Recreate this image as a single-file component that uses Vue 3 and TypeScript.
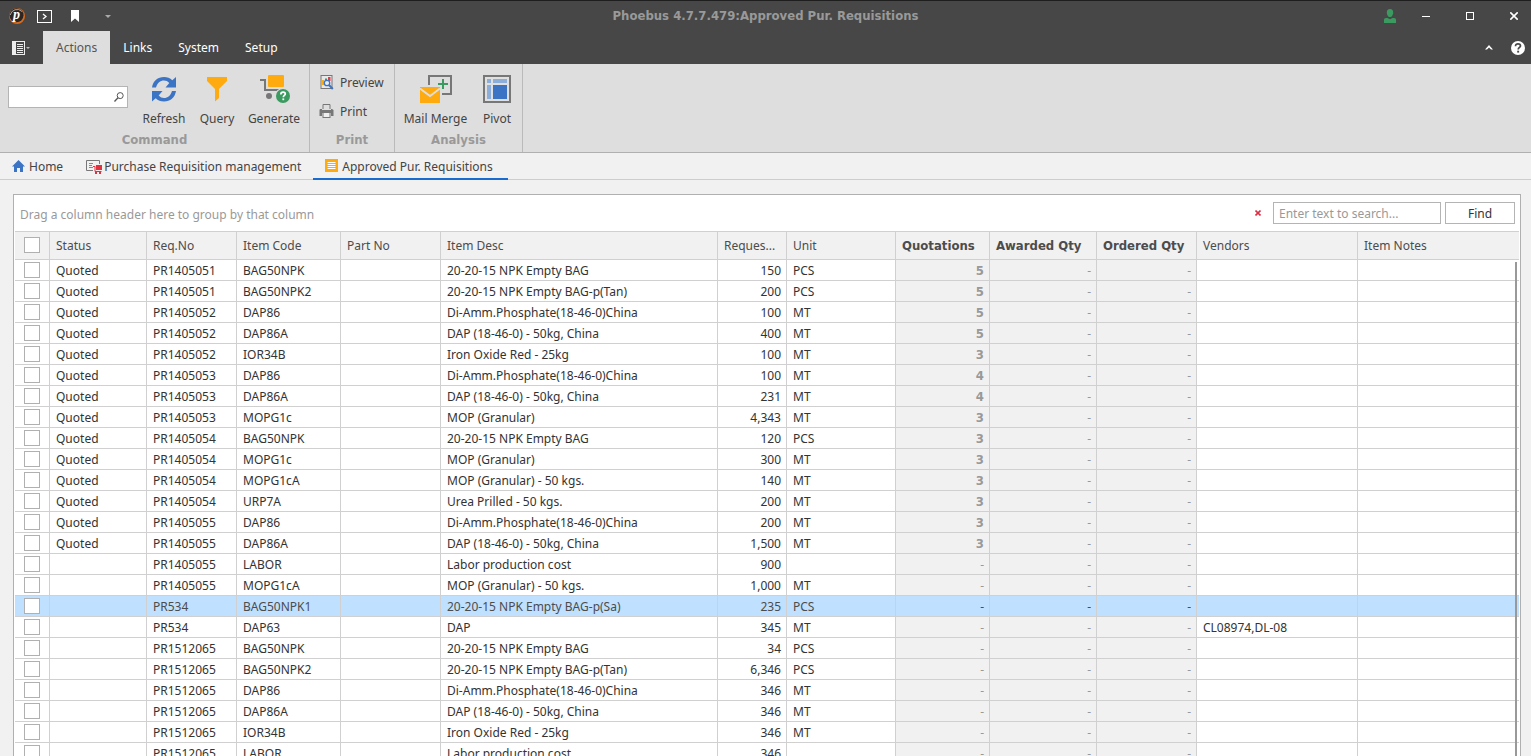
<script setup lang="ts">
import { ref } from 'vue'

interface Column {
  key: string
  title: string
  width: number | null
  summary?: boolean
}

interface Requisition {
  status: string
  reqNo: string
  code: string
  desc: string
  qty: string
  unit: string
  quotations: string
  vendors: string
}

const columns: Column[] = [
  { key: 'status', title: 'Status', width: 97 },
  { key: 'reqNo', title: 'Req.No', width: 90 },
  { key: 'code', title: 'Item Code', width: 104 },
  { key: 'partNo', title: 'Part No', width: 100 },
  { key: 'desc', title: 'Item Desc', width: 277 },
  { key: 'qty', title: 'Reques...', width: 69 },
  { key: 'unit', title: 'Unit', width: 109 },
  { key: 'quotations', title: 'Quotations', width: 94, summary: true },
  { key: 'awarded', title: 'Awarded Qty', width: 107, summary: true },
  { key: 'ordered', title: 'Ordered Qty', width: 100, summary: true },
  { key: 'vendors', title: 'Vendors', width: 161 },
  { key: 'notes', title: 'Item Notes', width: null },
]

const row = (
  status: string, reqNo: string, code: string, desc: string,
  qty: string, unit: string, quotations = '-', vendors = '',
): Requisition => ({ status, reqNo, code, desc, qty, unit, quotations, vendors })

const NPK = '20-20-15 NPK Empty BAG'
const PHOSPHATE = 'Di-Amm.Phosphate(18-46-0)China'
const DAP = 'DAP (18-46-0) - 50kg, China'

const rows = ref<Requisition[]>([
  row('Quoted', 'PR1405051', 'BAG50NPK', NPK, '150', 'PCS', '5'),
  row('Quoted', 'PR1405051', 'BAG50NPK2', NPK + '-p(Tan)', '200', 'PCS', '5'),
  row('Quoted', 'PR1405052', 'DAP86', PHOSPHATE, '100', 'MT', '5'),
  row('Quoted', 'PR1405052', 'DAP86A', DAP, '400', 'MT', '5'),
  row('Quoted', 'PR1405052', 'IOR34B', 'Iron Oxide Red - 25kg', '100', 'MT', '3'),
  row('Quoted', 'PR1405053', 'DAP86', PHOSPHATE, '100', 'MT', '4'),
  row('Quoted', 'PR1405053', 'DAP86A', DAP, '231', 'MT', '4'),
  row('Quoted', 'PR1405053', 'MOPG1c', 'MOP (Granular)', '4,343', 'MT', '3'),
  row('Quoted', 'PR1405054', 'BAG50NPK', NPK, '120', 'PCS', '3'),
  row('Quoted', 'PR1405054', 'MOPG1c', 'MOP (Granular)', '300', 'MT', '3'),
  row('Quoted', 'PR1405054', 'MOPG1cA', 'MOP (Granular) - 50 kgs.', '140', 'MT', '3'),
  row('Quoted', 'PR1405054', 'URP7A', 'Urea Prilled - 50 kgs.', '200', 'MT', '3'),
  row('Quoted', 'PR1405055', 'DAP86', PHOSPHATE, '200', 'MT', '3'),
  row('Quoted', 'PR1405055', 'DAP86A', DAP, '1,500', 'MT', '3'),
  row('', 'PR1405055', 'LABOR', 'Labor production cost', '900', ''),
  row('', 'PR1405055', 'MOPG1cA', 'MOP (Granular) - 50 kgs.', '1,000', 'MT'),
  row('', 'PR534', 'BAG50NPK1', NPK + '-p(Sa)', '235', 'PCS'),
  row('', 'PR534', 'DAP63', 'DAP', '345', 'MT', '-', 'CL08974,DL-08'),
  row('', 'PR1512065', 'BAG50NPK', NPK, '34', 'PCS'),
  row('', 'PR1512065', 'BAG50NPK2', NPK + '-p(Tan)', '6,346', 'PCS'),
  row('', 'PR1512065', 'DAP86', PHOSPHATE, '346', 'MT'),
  row('', 'PR1512065', 'DAP86A', DAP, '346', 'MT'),
  row('', 'PR1512065', 'IOR34B', 'Iron Oxide Red - 25kg', '346', 'MT'),
  row('', 'PR1512065', 'LABOR', 'Labor production cost', '346', ''),
])

const selected = ref(16)
const command = ref('')
const search = ref('')
const menus = ['Actions', 'Links', 'System', 'Setup']
const activeMenu = ref('Actions')
</script>

<template>
  <div class="window">
    <header class="chrome">
      <div class="titlebar">
        <div class="quick">
          <svg class="logo" width="16" height="16" viewBox="0 0 16 16" aria-hidden="true">
            <circle cx="8" cy="8" r="8" fill="#d96a1c" />
            <circle cx="7.5" cy="7.3" r="7" fill="#2b2624" />
            <path d="M1.200 7A7 7 0 0 1 13 3.500" stroke="#a9a29c" fill="none" />
            <text x="4" y="11" font-size="14" font-weight="bold" font-style="italic" fill="#fff" font-family="Liberation Serif, serif">p</text>
          </svg>
          <button class="plain" aria-label="Run command">
            <svg width="15" height="13" viewBox="0 0 15 13"><rect x=".5" y=".5" width="14" height="12" fill="none" stroke="#fff" /><path d="M6 4l3 2.500L6 9" fill="none" stroke="#fff" stroke-width="1.300" /></svg>
          </button>
          <button class="plain" aria-label="Bookmark">
            <svg width="8" height="12" viewBox="0 0 8 12"><path d="M0 0h8v12L4 8.500 0 12z" fill="#fff" /></svg>
          </button>
          <button class="plain" aria-label="Customize quick access">
            <svg width="6" height="3" viewBox="0 0 6 3"><path d="M0 0h6L3 3z" fill="#aaa" /></svg>
          </button>
        </div>
        <h1>Phoebus 4.7.7.479:Approved Pur. Requisitions</h1>
        <div class="controls">
          <button class="plain" aria-label="User">
            <svg width="12" height="14" viewBox="0 0 12 14"><path d="M6 0c2.200 0 3.200 1.400 3.200 3.400S8 8 6 8 2.800 5.400 2.800 3.400 3.800 0 6 0zM0 14v-3c0-1.300.7-2 2-2h1.500l2.500 1.300L8.500 9H10c1.300 0 2 .7 2 2v3z" fill="#3a9a60" /></svg>
          </button>
          <button class="plain" aria-label="Minimize">
            <svg width="8" height="8" viewBox="0 0 8 8"><path d="M0 4.500h8" stroke="#fff" /></svg>
          </button>
          <button class="plain" aria-label="Maximize">
            <svg width="8" height="8" viewBox="0 0 8 8"><rect x=".5" y=".5" width="7" height="7" fill="none" stroke="#fff" /></svg>
          </button>
          <button class="plain" aria-label="Close">
            <svg width="8" height="8" viewBox="0 0 8 8"><path d="M.3.3l7.400 7.400M7.700.3L.3 7.700" stroke="#fff" stroke-width="1.600" /></svg>
          </button>
        </div>
      </div>
      <nav class="menubar">
        <button class="file" aria-label="File menu">
          <svg width="18" height="14" viewBox="0 0 18 14"><rect width="3" height="14" fill="#eee" /><rect x="3.500" y=".5" width="9" height="13" fill="none" stroke="#eee" /><path d="M5 3.500h6M5 5.500h6M5 7.500h6M5 9.500h6M5 11.500h6" stroke="#eee" /><path d="M14 6h4l-2 2z" fill="#bbb" /></svg>
        </button>
        <button
          v-for="m in menus" :key="m" class="menu" :class="{ active: m === activeMenu }"
          @click="activeMenu = m"
        >{{ m }}</button>
        <div class="menu-end">
          <button class="plain" aria-label="Collapse ribbon">
            <svg width="8" height="5" viewBox="0 0 8 5"><path d="M4 0l4 4.500H6L4 2.600 2 4.500H0z" fill="#fff" /></svg>
          </button>
          <button class="plain" aria-label="Help">
            <svg width="14" height="14" viewBox="0 0 14 14"><circle cx="7" cy="7" r="7" fill="#fff" /><path d="M4.500 5.200C4.500 3.600 5.500 2.800 7 2.800s2.500.8 2.500 2.100C9.500 6.400 7.200 6.500 7.200 8.600" fill="none" stroke="#474747" stroke-width="1.700" /><rect x="6.200" y="9.700" width="1.900" height="1.900" fill="#474747" /></svg>
          </button>
        </div>
      </nav>
    </header>

    <section class="ribbon">
      <div class="group">
        <div class="tools command">
          <div class="command-box">
            <input v-model="command" type="text" aria-label="Command" />
            <svg width="10" height="10" viewBox="0 0 10 10" aria-hidden="true"><circle cx="6.200" cy="3.600" r="3" fill="none" stroke="#555" /><path d="M4 5.800L.5 9.500" stroke="#555" stroke-width="1.300" /></svg>
          </div>
          <button class="big refresh">
            <svg width="32" height="32" viewBox="0 0 32 32" aria-hidden="true"><g fill="#3b74c5"><path d="M4 14.500C5 8 9.800 4 16 4c3.300 0 6 1 8.300 3.200L28 4v10.500H17.500L21.300 10C19.800 8.300 18 7.500 16 7.500c-3.800 0-6.700 2.500-8 7z" /><path d="M28 18c-1 6.500-5.800 10.500-12 10.500-3.300 0-6-1-8.300-3.200L4 28.500V18h10.500l-3.800 4.500c1.500 1.700 3.300 2.500 5.300 2.500 3.800 0 6.700-2.500 8-7z" /></g></svg>
            <span>Refresh</span>
          </button>
          <button class="big query">
            <svg width="32" height="32" viewBox="0 0 32 32" aria-hidden="true"><path d="M6 4h20v4l-8 8v9l-4 3.500V16L6 8z" fill="#ffab0f" /></svg>
            <span>Query</span>
          </button>
          <button class="big generate">
            <svg width="32" height="32" viewBox="0 0 32 32" aria-hidden="true"><path d="M2 7h5v10h14" fill="none" stroke="#777" stroke-width="2" /><rect x="10" y="2" width="16" height="12" rx="1" fill="#ffab0f" /><circle cx="11" cy="23" r="3" fill="#777" /><circle cx="25" cy="23" r="8" fill="#dedede" /><circle cx="25" cy="23" r="7" fill="#3a9a60" /><path d="M22.800 21.500c0-1.700 1-2.400 2.300-2.400s2.200.7 2.200 1.800c0 1.500-2 1.500-2 3.300" fill="none" stroke="#fff" stroke-width="1.700" /><rect x="24.400" y="25.400" width="1.800" height="1.800" fill="#fff" /></svg>
            <span>Generate</span>
          </button>
        </div>
        <div class="caption">Command</div>
      </div>

      <div class="group">
        <div class="tools stack">
          <button class="small">
            <svg width="16" height="16" viewBox="0 0 16 16" aria-hidden="true"><rect x="2" y="1.500" width="11" height="13" fill="#e8e8e8" stroke="#777" /><path d="M3 6h2v5H3z" fill="#ffab0f" /><path d="M6 4.500h2V7H6z" fill="#3a9a60" /><path d="M9 3h2.500v4H9z" fill="#e23b4a" /><circle cx="8" cy="9" r="2.700" fill="#eee" stroke="#3b74c5" stroke-width="1.300" /><path d="M10 11l3.800 4" stroke="#3b74c5" stroke-width="2" /></svg>
            <span>Preview</span>
          </button>
          <button class="small">
            <svg width="16" height="16" viewBox="0 0 16 16" aria-hidden="true"><path d="M4 6V1.500h7V6" fill="none" stroke="#777" /><path d="M1 6h2v1h9V6h1l1.500 1v6H12v-3H3v3H.5V7z" fill="#777" /><rect x="4" y="9.500" width="7" height="5" fill="#eee" stroke="#777" /></svg>
            <span>Print</span>
          </button>
        </div>
        <div class="caption">Print</div>
      </div>

      <div class="group">
        <div class="tools analysis">
          <button class="big merge">
            <svg width="32" height="32" viewBox="0 0 32 32" aria-hidden="true"><path d="M9 12V3h22v18h-9" fill="none" stroke="#777" stroke-width="2" /><path d="M23 6v10M18 11h10" stroke="#3a9a60" stroke-width="2" /><rect y="14" width="20" height="16" fill="#ffab0f" /><path d="M0 15.500L10 23l10-7.500" fill="none" stroke="#dedede" stroke-width="1.800" /></svg>
            <span>Mail Merge</span>
          </button>
          <button class="big pivot">
            <svg width="32" height="32" viewBox="0 0 32 32" aria-hidden="true"><rect x="3" y="3" width="26" height="26" fill="#e0e0e0" stroke="#777" stroke-width="2" /><g fill="#8caedb"><rect x="6" y="6" width="4" height="4" /><rect x="12" y="6" width="14" height="4" /><rect x="6" y="12" width="4" height="14" /></g><rect x="12" y="12" width="14" height="14" fill="#3b74c5" /></svg>
            <span>Pivot</span>
          </button>
        </div>
        <div class="caption">Analysis</div>
      </div>
    </section>

    <nav class="tabs">
      <a href="#home" class="home">
        <svg class="gap" width="13" height="12" viewBox="0 0 13 12" aria-hidden="true"><path d="M6.500 0L13 6.500h-2V12H8V8H5v4H2V6.500H0z" fill="#3b74c5" /></svg>
        <span>Home</span>
      </a>
      <a href="#management">
        <svg width="18" height="16" viewBox="0 0 18 16" aria-hidden="true"><path d="M7 12.500H.5v-10h13V6" fill="none" stroke="#777" /><path d="M3 5.500h4M3 7.500h3M3 9.500h4" stroke="#888" /><path d="M7 8.500h2v5h6.500" fill="none" stroke="#e0313f" /><rect x="10" y="7" width="6" height="5" fill="#e0313f" /><path d="M9 14h2v2H9zM13 14h2v2h-2z" fill="#e0313f" /></svg>
        <span>Purchase Requisition management</span>
      </a>
      <a href="#approved" class="current" aria-current="page">
        <svg class="gap" width="13" height="13" viewBox="0 0 13 13" aria-hidden="true"><rect width="13" height="13" fill="#ffab0f" /><path d="M2.500 3.500h8M2.500 5.500h8M2.500 7.500h8M2.500 9.500h8" stroke="#fff" /></svg>
        <span>Approved Pur. Requisitions</span>
      </a>
    </nav>

    <main class="page">
      <div class="grid">
        <div class="panel">
          <span class="hint">Drag a column header here to group by that column</span>
          <button class="plain clear" aria-label="Close search">
            <svg width="6" height="6" viewBox="0 0 6 6"><path d="M.5.5l5 5M5.500.5l-5 5" stroke="#dc2f45" stroke-width="1.600" /></svg>
          </button>
          <input v-model="search" class="search" type="text" placeholder="Enter text to search..." aria-label="Search" />
          <button class="find">Find</button>
        </div>
        <div class="sheet">
          <table>
            <colgroup>
              <col class="check-col" />
              <col v-for="c in columns" :key="c.key" :style="c.width ? { width: c.width + 'px' } : {}" />
            </colgroup>
            <thead>
              <tr>
                <th class="check"><input type="checkbox" aria-label="Select all rows" /></th>
                <th v-for="c in columns" :key="c.key" :class="{ strong: c.summary }">{{ c.title }}</th>
              </tr>
            </thead>
            <tbody>
              <tr v-for="(r, i) in rows" :key="i" :class="{ selected: i === selected }" @click="selected = i">
                <td class="check"><input type="checkbox" :aria-label="'Select ' + r.reqNo + ' ' + r.code" /></td>
                <td>{{ r.status }}</td>
                <td>{{ r.reqNo }}</td>
                <td>{{ r.code }}</td>
                <td></td>
                <td>{{ r.desc }}</td>
                <td class="right">{{ r.qty }}</td>
                <td>{{ r.unit }}</td>
                <td class="right sum" :class="{ strong: r.quotations !== '-' }">{{ r.quotations }}</td>
                <td class="right sum">-</td>
                <td class="right sum">-</td>
                <td>{{ r.vendors }}</td>
                <td></td>
              </tr>
            </tbody>
          </table>
          <div class="scrollbar"></div>
        </div>
      </div>
    </main>
  </div>
</template>

<style>
body {
  background: #f1f1f1;
  overflow: hidden;
}
</style>

<style scoped>
.window {
  display: flex;
  flex-direction: column;
  height: 100vh;
  overflow: hidden;
  background: #f1f1f1;
  color: #444;
  font-family: "Noto Sans", "DejaVu Sans Condensed", sans-serif;
  font-size: 12px;
  line-height: 16px;
}
.window *,
.window {
  box-sizing: border-box;
}
button,
input {
  margin: 0;
  font: inherit;
  color: inherit;
}
button {
  padding: 0;
  border: 0;
  background: none;
}
svg {
  display: block;
  flex: none;
}
h1,
.caption,
.strong {
  font-family: "DejaVu Sans Condensed", "DejaVu Sans", sans-serif;
  font-size: 13px;
  font-weight: bold;
}
.plain {
  display: flex;
  align-items: center;
  justify-content: center;
}
.chrome {
  flex: none;
  background: #474747;
  border-top: 1px solid #1e1e1e;
}
.titlebar {
  display: grid;
  grid-template-columns: 1fr auto 1fr;
  align-items: center;
  height: 30px;
}
.quick {
  display: flex;
  align-items: center;
  padding-left: 9px;
}
.quick button:nth-of-type(1) { margin-left: 12px; }
.quick button:nth-of-type(2) { margin-left: 19px; }
.quick button:nth-of-type(3) { margin-left: 26px; }
h1 {
  margin: 0;
  color: #999;
}
.controls {
  display: flex;
  justify-content: flex-end;
  gap: 36px;
  padding-right: 13px;
}
.controls button:first-child { margin-right: -10px; }
.menubar {
  display: flex;
  height: 33px;
}
.file {
  width: 43px;
  padding-left: 12px;
}
.menu {
  padding: 0 13px;
  color: #fff;
}
.menu.active {
  background: #dedede;
  color: #555;
}
.menu-end {
  display: flex;
  align-items: center;
  gap: 18px;
  margin-left: auto;
  padding-right: 6px;
}
.ribbon {
  display: flex;
  flex: none;
  height: 89px;
  background: #dedede;
  border-bottom: 1px solid #b0b0b0;
}
.group {
  display: flex;
  flex-direction: column;
  border-right: 1px solid #bababa;
}
.tools {
  display: flex;
  height: 68px;
}
.tools.command { padding: 0 2px 0 8px; }
.tools.stack {
  flex-direction: column;
  gap: 13px;
  width: 84px;
  padding: 10px 0 0 9px;
}
.tools.analysis { padding: 0 1px 0 3px; }
.caption {
  color: #999;
  text-align: center;
}
.command-box {
  display: flex;
  align-items: center;
  width: 120px;
  height: 22px;
  margin: 22px 7px 0 0;
  padding-right: 3px;
  background: #fff;
  border: 1px solid #b4b4b4;
}
.command-box input {
  flex: 1;
  min-width: 0;
  height: 100%;
  padding: 0 4px;
  border: 0;
  outline: 0;
  background: none;
}
.big {
  display: flex;
  flex-direction: column;
  align-items: center;
  gap: 6px;
  padding-top: 9px;
}
.refresh { width: 58px; }
.query { width: 48px; }
.generate { width: 66px; }
.merge { width: 75px; }
.pivot { width: 48px; }
.small {
  display: flex;
  align-items: center;
  gap: 5px;
  height: 16px;
}
.small span,
.tabs span { padding-top: 2px; }
.tabs {
  display: flex;
  flex: none;
  height: 27px;
  border-bottom: 1px solid #cdcdcd;
}
.tabs a {
  display: flex;
  align-items: center;
  height: 27px;
  padding: 0 12px;
  border-bottom: 2px solid transparent;
  color: #444;
  text-decoration: none;
}
.tabs a.home { padding-right: 11px; }
.tabs a.current {
  min-width: 195px;
  border-bottom-color: #1a6bd0;
}
.tabs .gap { margin-right: 4px; }
.page {
  flex: 1;
  min-height: 0;
  padding: 14px 10px 0 13px;
}
.grid {
  padding: 0 1px;
  background: #fff;
  border: 1px solid #b0b0b0;
}
.panel {
  display: flex;
  align-items: center;
  height: 36px;
  padding: 0 4px 0 5px;
}
.hint {
  flex: 1;
  padding-top: 3px;
  color: #999;
}
.clear { margin-right: 12px; }
.search {
  width: 168px;
  height: 22px;
  margin-right: 4px;
  padding: 0 5px;
  background: #fff;
  border: 1px solid #b4b4b4;
  outline: 0;
}
.search::placeholder {
  color: #999;
  opacity: 1;
}
.find {
  width: 70px;
  height: 22px;
  padding-top: 2px;
  background: #fff;
  border: 1px solid #b4b4b4;
  color: #333;
}
.sheet { position: relative; }
table {
  width: 100%;
  table-layout: fixed;
  border-collapse: separate;
  border-spacing: 0;
}
.check-col { width: 35px; }
th,
td {
  padding: 0 5px 0 6px;
  border-right: 1px solid #d0d0d0;
  border-bottom: 1px solid #d0d0d0;
  overflow: hidden;
  text-align: left;
  white-space: nowrap;
}
th:last-child,
td:last-child { border-right: 0; }
th {
  height: 29px;
  background: #f1f1f1;
  border-top: 1px solid #d0d0d0;
  color: #4c4c4c;
}
th:not(.strong) { font-weight: normal; }
td {
  height: 21px;
  padding-top: 2px;
  color: #333;
}
td.right { text-align: right; }
td.sum {
  background: #f1f1f1;
  color: #999;
}
tr.selected td {
  background: #c0e0ff;
  color: #4c4c4c;
}
td.check { padding: 0 0 0 9px; }
th.check { padding: 0 0 2px 9px; }
.check input {
  display: block;
  width: 16px;
  height: 16px;
  margin: 0;
  appearance: none;
  background: #fff;
  border: 1px solid #b0b0b0;
}
.scrollbar {
  position: absolute;
  top: 31px;
  right: 2px;
  bottom: 0;
  width: 2px;
  background: #999;
}
</style>
